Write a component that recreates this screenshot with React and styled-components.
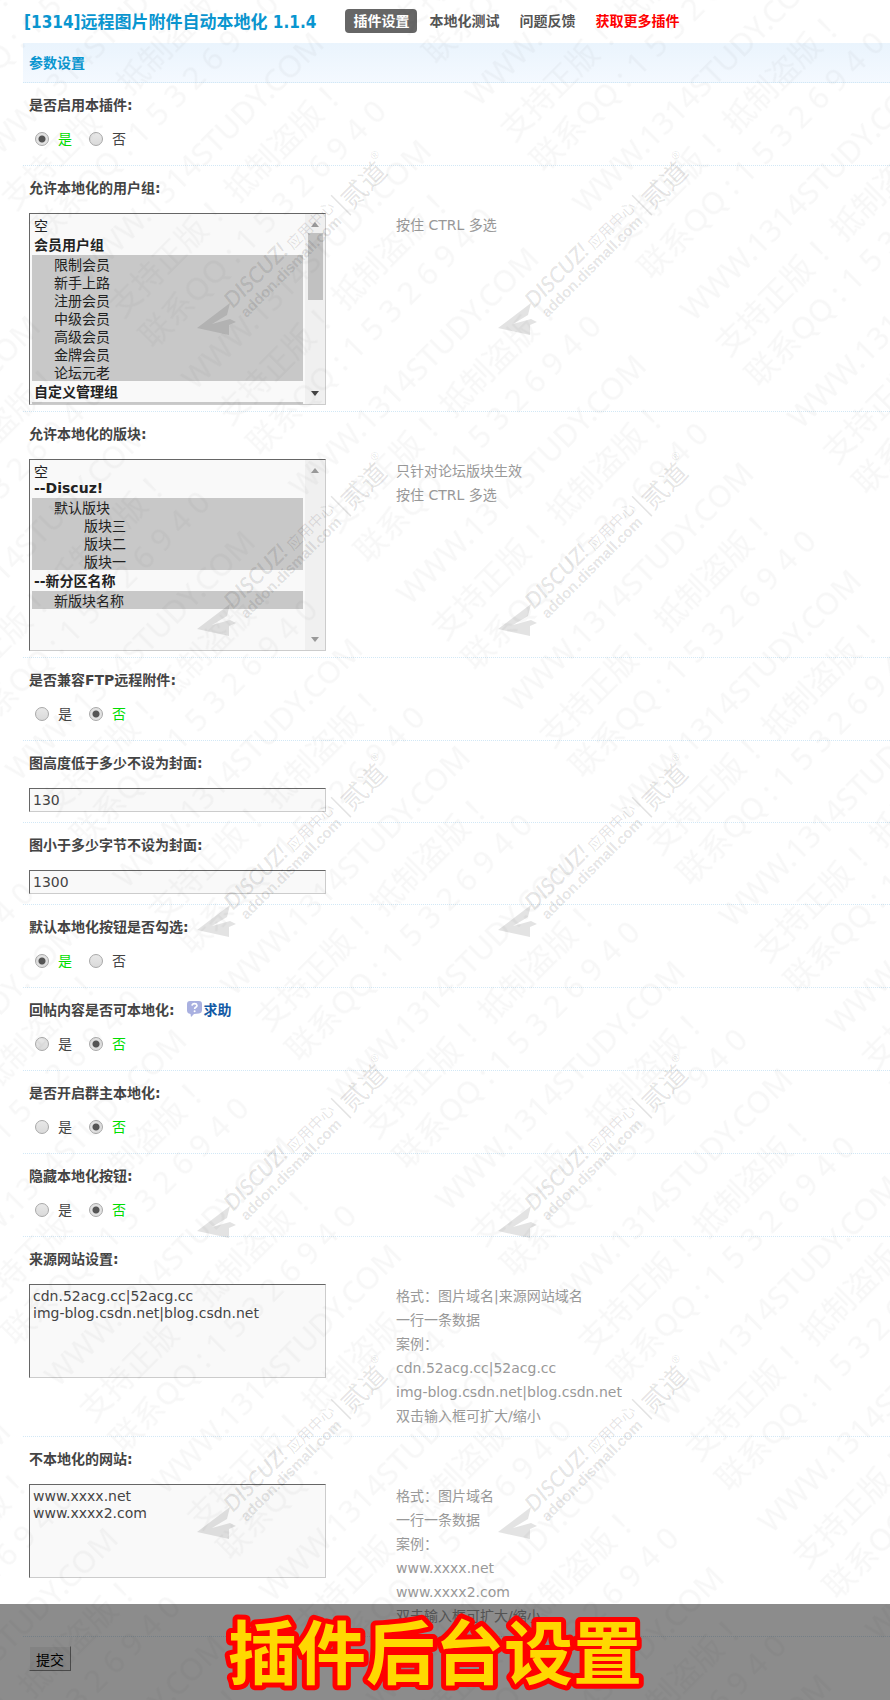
import { useState } from "react";
import styled, { createGlobalStyle, css } from "styled-components";

const GlobalStyle = createGlobalStyle`
  * {
    box-sizing: border-box;
  }
  body {
    margin: 0;
    background: #fff;
    color: #444;
    font-family: "DejaVu Sans", "Noto Sans CJK SC", sans-serif;
    font-size: 14px;
  }
  input, select, textarea, button {
    font-family: inherit;
  }
`;

const StPage = styled.div`
  position: relative;
  min-height: 100vh;
  padding-left: 23px;
  overflow: hidden;
`;
const StHeader = styled.header`
  display: flex;
  align-items: center;
  height: 43px;
  padding-bottom: 2px;
`;
const StTitle = styled.h1`
  margin: 0 29px 0 1px;
  font-family: "DejaVu Sans Condensed", "Noto Sans CJK SC", sans-serif;
  font-size: 17px;
  font-weight: bold;
  color: #0a96d0;
  white-space: nowrap;
`;
const StNav = styled.nav`
  display: flex;
  gap: 4px;
`;
const StNavLink = styled.a`
  padding: 0 8px;
  line-height: 24px;
  border-radius: 4px;
  font-weight: bold;
  text-decoration: none;
  white-space: nowrap;
  color: ${(props) => props.$color || "#555"};
  background: ${(props) => (props.$active ? "#666" : "transparent")};
`;
const StSectionTitle = styled.h2`
  margin: 0;
  padding-left: 6px;
  height: 40px;
  line-height: 40px;
  font-size: 14px;
  color: #0a96d0;
  background: linear-gradient(#eaf4fd, #f4f9ff);
  border-bottom: 1px dotted #d2e8f6;
`;
const StRow = styled.div`
  padding: 0 6px ${(props) => props.$bottom}px;
  border-bottom: 1px dotted #d2e8f6;
`;
const StRowHead = styled.div`
  display: flex;
  align-items: center;
  gap: 12px;
  height: 42px;
  font-weight: bold;
`;
const StRowBody = styled.div`
  display: grid;
  grid-template-columns: 297px 1fr;
  column-gap: 70px;
  align-items: start;
  padding-top: 5px;
`;
const StHelp = styled.a`
  display: flex;
  align-items: center;
  gap: 2px;
  color: #1259a5;
  text-decoration: none;
`;
const StHints = styled.div`
  color: #999;
  line-height: 24px;
`;

const StRadios = styled.div`
  display: flex;
  gap: 17px;
  padding-left: 6px;
  line-height: 18px;
`;
const StRadioLabel = styled.label`
  display: flex;
  align-items: center;
  gap: 9px;
  color: ${(props) => (props.$on ? "#00dd00" : "#444")};
`;
const StRadio = styled.input`
  appearance: none;
  margin: 0;
  width: 14px;
  height: 14px;
  border: 1px solid #a8a8a8;
  border-radius: 50%;
  background: linear-gradient(#e8e8e8, #dadada);
  &:checked {
    background: radial-gradient(circle, #555 0 3px, #e2e2e2 4px);
  }
`;

const field = css`
  width: 100%;
  border: 1px solid;
  border-color: #666 #ccc #ccc #666;
  border-radius: 0;
  background: #f9f9f9;
  color: #444;
  outline: none;
`;
const StInput = styled.input`
  ${field}
  height: 24px;
  padding: 0 3px;
  font-size: 14px;
`;
const StTextarea = styled.textarea`
  ${field}
  display: block;
  height: 94px;
  padding: 3px;
  font-size: 14px;
  line-height: 17px;
  resize: none;
  overflow: hidden;
`;

const StListBox = styled.div`
  ${field}
  display: flex;
  height: 192px;
`;
const StSelect = styled.select`
  flex: 1;
  min-width: 0;
  height: 100%;
  padding: 2px;
  border: none;
  outline: none;
  background: transparent;
  color: #222;
  font-size: 14px;
  scrollbar-width: none;

  option {
    display: flex;
    align-items: center;
    padding: 0 2px;
    height: 18px;
    min-height: 18px;
  }
  option:checked {
    background: #c8c8c8 linear-gradient(#c8c8c8, #c8c8c8);
    color: #222;
  }
  optgroup option {
    padding-left: 22px;
  }
  optgroup option.sub {
    padding-left: 52px;
  }
`;
const StScrollbar = styled.div`
  display: flex;
  flex-direction: column;
  align-items: center;
  width: 20px;
  padding: 8px 0;
  background: #f0f0f0;
`;
const StArrow = styled.span`
  border: 4px solid transparent;
  border-top-width: ${(props) => (props.$down ? 5 : 0)}px;
  border-bottom-width: ${(props) => (props.$down ? 0 : 5)}px;
  border-top-color: ${(props) => (props.$enabled ? "#444" : "#999")};
  border-bottom-color: #999;
`;
const StTrack = styled.span`
  flex: 1;
  width: 15px;
  padding-top: 6px;
`;
const StThumb = styled.span`
  display: block;
  height: 67px;
  background: #c1c1c1;
`;

const StSubmit = styled.button`
  display: block;
  margin: 9px 6px 28px;
  width: 42px;
  height: 25px;
  padding: 0;
  border: 1px solid;
  border-color: #fff #888 #888 #fff;
  background: #eee;
  color: #000;
  font-size: 14px;
`;

const StWatermark = styled.svg`
  position: absolute;
  inset: 0;
  width: 100%;
  height: 100%;
  pointer-events: none;
`;
const StBanner = styled.div`
  position: absolute;
  left: 0;
  right: 0;
  bottom: 0;
  display: flex;
  justify-content: center;
  padding-right: 20px;
  background: rgba(0, 0, 0, 0.45);
  pointer-events: none;
`;
const StBannerText = styled.text`
  font-family: "Noto Sans CJK SC", sans-serif;
  font-size: 69px;
  font-weight: 700;
  fill: #ffd800;
  stroke: #f00;
  stroke-width: 10px;
  stroke-linejoin: round;
  paint-order: stroke;
`;

const userGroups = [
  { label: "会员用户组", options: ["限制会员", "新手上路", "注册会员", "中级会员", "高级会员", "金牌会员", "论坛元老"] },
  { label: "自定义管理组", options: ["网站编辑", "信息监察员", "审核员", "实习版主"] },
  { label: "系统用户组", options: ["管理员", "超级版主", "版主", "禁止发言", "禁止访问", "禁止 IP", "游客", "等待验证会员"] },
];

const forums = [
  { label: "--Discuz!", options: ["默认版块", "版块三", "版块二", "版块一"], sub: ["版块三", "版块二", "版块一"] },
  { label: "--新分区名称", options: ["新版块名称"] },
];

const BubbleIcon = () => (
  <svg width="15" height="16" viewBox="0 0 15 16" aria-hidden="true">
    <path
      d="M3 0h9q3 0 3 3v6q0 3-3 3.500l-5 .5-3 3-.5-3Q0 12.500 0 9.500V3q0-3 3-3z"
      fill="#a9b0e0"
    />
    <path
      d="M5 4.600q.3-2 2.500-2t2.500 1.800q0 1.100-1.200 1.800T7.600 8"
      fill="none"
      stroke="#fff"
      strokeWidth="1.600"
    />
    <circle cx="7.600" cy="10.200" r="1" fill="#fff" />
  </svg>
);

function Row({ id, label, bottom, hints = [], help, children }) {
  return (
    <StRow $bottom={bottom}>
      <StRowHead>
        <label htmlFor={id}>{label}:</label>
        {help && (
          <StHelp href="#help">
            <BubbleIcon />
            求助
          </StHelp>
        )}
      </StRowHead>
      <StRowBody>
        {children}
        {hints.length > 0 && (
          <StHints>
            {hints.map((hint) => (
              <div key={hint}>{hint}</div>
            ))}
          </StHints>
        )}
      </StRowBody>
    </StRow>
  );
}

function RadioRow({ id, label, initial, help }) {
  const [value, setValue] = useState(initial);

  return (
    <Row id={`${id}-是`} label={label} bottom={17} help={help}>
      <StRadios>
        {["是", "否"].map((item) => (
          <StRadioLabel key={item} $on={value === item}>
            <StRadio
              type="radio"
              id={`${id}-${item}`}
              name={id}
              checked={value === item}
              onChange={() => setValue(item)}
            />
            {item}
          </StRadioLabel>
        ))}
      </StRadios>
    </Row>
  );
}

function InputRow({ id, label, value }) {
  return (
    <Row id={id} label={label} bottom={10}>
      <StInput id={id} type="text" defaultValue={value} />
    </Row>
  );
}

function SelectRow({ id, label, groups, hints, scrollable = false }) {
  const selected = groups.flatMap((group) => group.options);

  return (
    <Row id={id} label={label} bottom={6} hints={hints}>
      <StListBox>
        <StSelect id={id} multiple defaultValue={selected}>
          <option value="">空</option>
          {groups.map((group) => (
            <optgroup key={group.label} label={group.label}>
              {group.options.map((item) => (
                <option
                  key={item}
                  value={item}
                  className={group.sub?.includes(item) ? "sub" : undefined}
                >
                  {item}
                </option>
              ))}
            </optgroup>
          ))}
        </StSelect>
        <StScrollbar aria-hidden="true">
          <StArrow />
          <StTrack>{scrollable && <StThumb />}</StTrack>
          <StArrow $down $enabled={scrollable} />
        </StScrollbar>
      </StListBox>
    </Row>
  );
}

function TextareaRow({ id, label, value, hints }) {
  return (
    <Row id={id} label={label} bottom={8} hints={hints}>
      <StTextarea id={id} defaultValue={value} />
    </Row>
  );
}

const stampRows = [0, 1, 2, 3, 4];
const stampCols = [0, 1];

function Watermark() {
  return (
    <StWatermark aria-hidden="true">
      <defs>
        <pattern
          id="copyright"
          width="401"
          height="152"
          patternUnits="userSpaceOnUse"
          patternTransform="translate(456 88) rotate(-45)"
        >
          <g
            fill="#000"
            fillOpacity="0.03"
            fontSize="31"
            fontFamily="'Noto Sans', 'Noto Sans CJK SC', sans-serif"
            style={{ whiteSpace: "pre" }}
          >
            <text x="2" y="30">WWW.1314STUDY.COM</text>
            <text x="2" y="79">支持正版   ！抵制盗版   ！</text>
            <text x="2" y="122">联系QQ   : 1 5 3 2 6 9 4 0</text>
          </g>
        </pattern>
        <g id="stamp" fill="#000" fillOpacity="0.11">
          <path d="M0 0l33-25-3 12-15 9 18-5 6 3-7 3v10z" />
          <g transform="translate(36 -19) rotate(-45)">
            <text fontFamily="Lato, sans-serif" fontSize="22" fontStyle="italic" fontWeight="600">
              DISCUZ!
            </text>
            <text x="84" y="1" fontFamily="'Noto Sans CJK SC', sans-serif" fontSize="15">
              应用中心
            </text>
            <text x="3" y="16" fontFamily="'Liberation Sans', sans-serif" fontSize="15" fontWeight="bold">
              addon.dismall.com
            </text>
            <rect x="149" y="-11" width="1.500" height="28" />
            <text x="154" y="14" fontFamily="'Noto Sans CJK SC', sans-serif" fontSize="26">
              贰道
            </text>
            <text x="205" y="-5" fontFamily="'Liberation Sans', sans-serif" fontSize="11">
              ®
            </text>
          </g>
        </g>
      </defs>
      <rect width="100%" height="100%" fill="url(#copyright)" />
      {stampRows.map((row) =>
        stampCols.map((col) => (
          <use
            key={`${row}-${col}`}
            href="#stamp"
            x={197 + col * 301}
            y={328 + row * 301}
          />
        ))
      )}
    </StWatermark>
  );
}

export default function App() {
  const handleSubmit = (e) => {
    e.preventDefault();
  };

  return (
    <StPage>
      <GlobalStyle />
      <StHeader>
        <StTitle>[1314]远程图片附件自动本地化 1.1.4</StTitle>
        <StNav>
          <StNavLink href="#settings" $active $color="#fff">
            插件设置
          </StNavLink>
          <StNavLink href="#test">本地化测试</StNavLink>
          <StNavLink href="#feedback">问题反馈</StNavLink>
          <StNavLink href="#more" $color="#f00">
            获取更多插件
          </StNavLink>
        </StNav>
      </StHeader>

      <form onSubmit={handleSubmit}>
        <StSectionTitle>参数设置</StSectionTitle>
        <RadioRow id="enabled" label="是否启用本插件" initial="是" />
        <SelectRow
          id="groups"
          label="允许本地化的用户组"
          groups={userGroups}
          hints={["按住 CTRL 多选"]}
          scrollable
        />
        <SelectRow
          id="forums"
          label="允许本地化的版块"
          groups={forums}
          hints={["只针对论坛版块生效", "按住 CTRL 多选"]}
        />
        <RadioRow id="ftp" label="是否兼容FTP远程附件" initial="否" />
        <InputRow id="height" label="图高度低于多少不设为封面" value="130" />
        <InputRow id="size" label="图小于多少字节不设为封面" value="1300" />
        <RadioRow id="checked" label="默认本地化按钮是否勾选" initial="是" />
        <RadioRow id="reply" label="回帖内容是否可本地化" initial="否" help />
        <RadioRow id="owner" label="是否开启群主本地化" initial="否" />
        <RadioRow id="hide" label="隐藏本地化按钮" initial="否" />
        <TextareaRow
          id="source"
          label="来源网站设置"
          value={"cdn.52acg.cc|52acg.cc\nimg-blog.csdn.net|blog.csdn.net"}
          hints={[
            "格式：图片域名|来源网站域名",
            "一行一条数据",
            "案例：",
            "cdn.52acg.cc|52acg.cc",
            "img-blog.csdn.net|blog.csdn.net",
            "双击输入框可扩大/缩小",
          ]}
        />
        <TextareaRow
          id="exclude"
          label="不本地化的网站"
          value={"www.xxxx.net\nwww.xxxx2.com"}
          hints={[
            "格式：图片域名",
            "一行一条数据",
            "案例：",
            "www.xxxx.net",
            "www.xxxx2.com",
            "双击输入框可扩大/缩小",
          ]}
        />
        <StSubmit type="submit">提交</StSubmit>
      </form>

      <Watermark />
      <StBanner>
        <svg width="430" height="96" viewBox="0 0 430 96">
          <StBannerText x="215" y="75" textAnchor="middle">
            插件后台设置
          </StBannerText>
        </svg>
      </StBanner>
    </StPage>
  );
}
